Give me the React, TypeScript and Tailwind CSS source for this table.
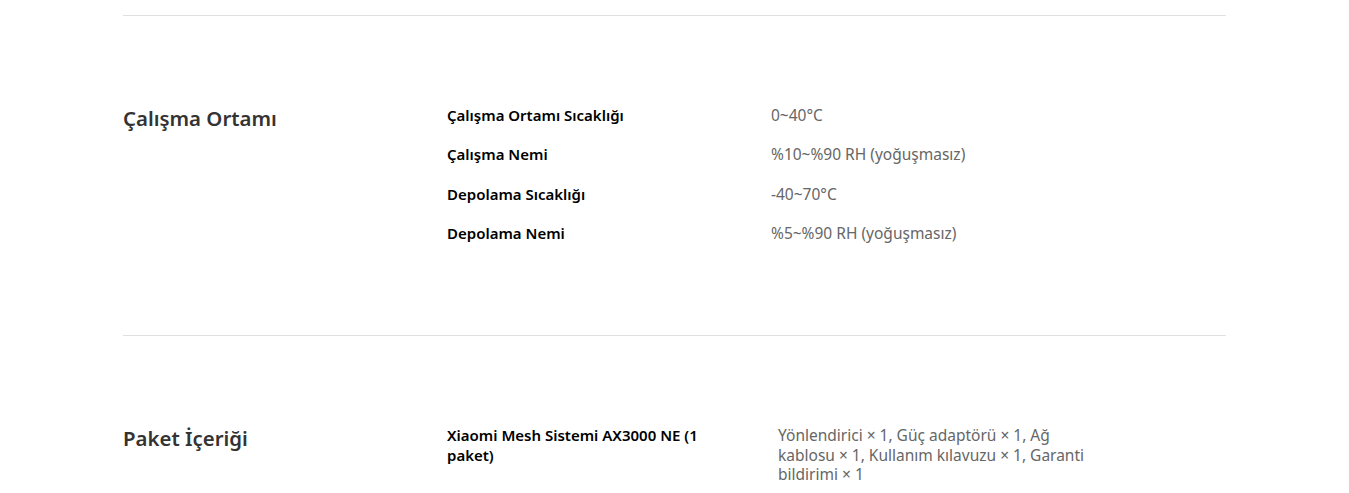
import React from 'react';

type Spec = { label: string; value: string };

const sections: { title: string; labelWidth: string; valueWidth: string; rows: Spec[] }[] = [
  {
    title: 'Çalışma Ortamı',
    labelWidth: 'w-[324px] pr-5',
    valueWidth: 'w-[324px]',
    rows: [
      { label: 'Çalışma Ortamı Sıcaklığı', value: '0~40°C' },
      { label: 'Çalışma Nemi', value: '%10~%90 RH (yoğuşmasız)' },
      { label: 'Depolama Sıcaklığı', value: '-40~70°C' },
      { label: 'Depolama Nemi', value: '%5~%90 RH (yoğuşmasız)' },
    ],
  },
  {
    title: 'Paket İçeriği',
    labelWidth: 'w-[331px] pr-[60px]',
    valueWidth: 'w-[312px]',
    rows: [
      {
        label: 'Xiaomi Mesh Sistemi AX3000 NE (1 paket)',
        value: 'Yönlendirici × 1, Güç adaptörü × 1, Ağ kablosu × 1, Kullanım kılavuzu × 1, Garanti bildirimi × 1',
      },
    ],
  },
];

const App: React.FC = () => {
  return (
    <div className="min-h-screen bg-white font-['Noto_Sans',sans-serif]">
      <div className="mx-auto w-[1103px] pt-[15px]">
        {sections.map((section, i) => (
          <section key={i} className="flex border-t border-[#e0e0e0] pt-[88px] pb-[92px]">
            <h2 className="w-[324px] shrink-0 text-[20.4px] leading-[28px] font-semibold text-[#333]">
              {section.title}
            </h2>
            <div className="mt-[2px] flex flex-col gap-[19.8px]">
              {section.rows.map((row, j) => (
                <div key={j} className="flex">
                  <div className={`${section.labelWidth} shrink-0 text-[15px] leading-[19.5px] font-semibold text-black`}>
                    {row.label}
                  </div>
                  <div className={`${section.valueWidth} text-[15.5px] leading-[19.5px] text-[#666]`}>{row.value}</div>
                </div>
              ))}
            </div>
          </section>
        ))}
      </div>
    </div>
  );
};

export default App;
